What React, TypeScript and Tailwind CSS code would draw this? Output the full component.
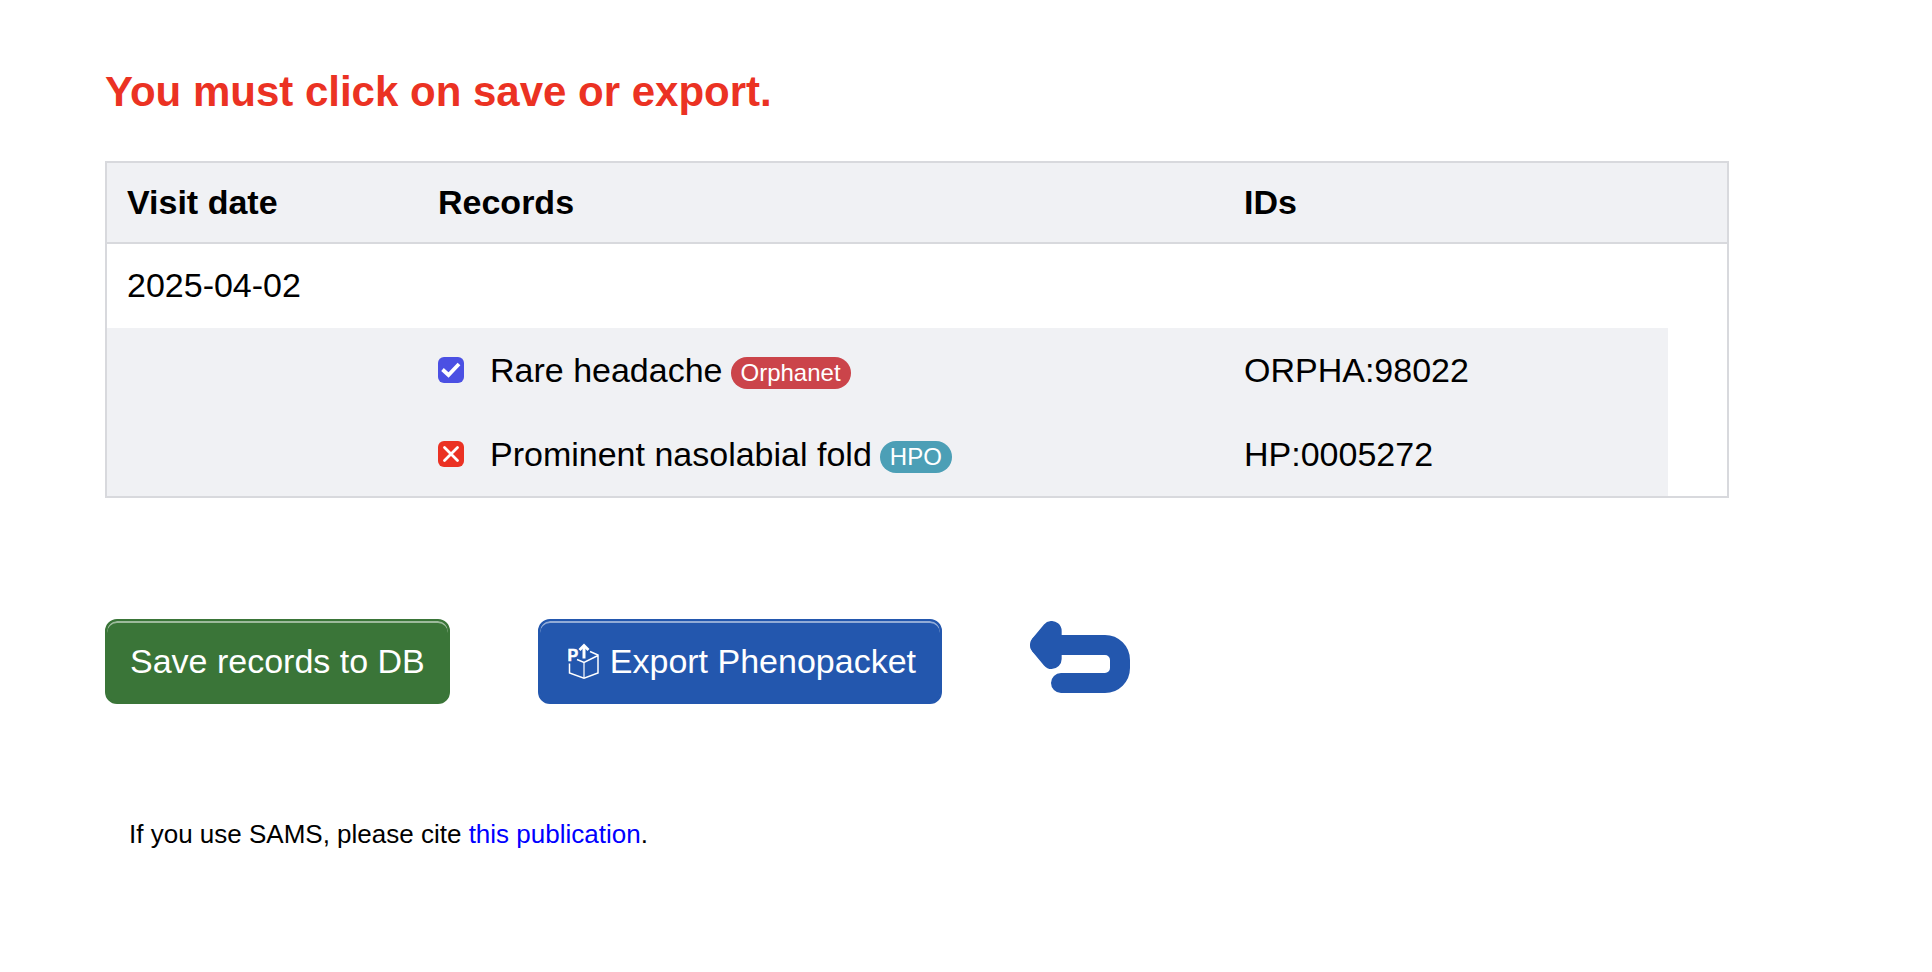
import { useState } from 'react'
import { clsx } from 'clsx'

const visits = [
  {
    date: '2025-04-02',
    records: [
      { name: 'Rare headache', source: 'Orphanet', id: 'ORPHA:98022', present: true },
      { name: 'Prominent nasolabial fold', source: 'HPO', id: 'HP:0005272', present: false },
    ],
  },
]

function StatusBox({ id, present }: { id: string; present: boolean }) {
  const [checked, setChecked] = useState(true)

  return (
    <span className="grid size-[26px] shrink-0">
      <input
        id={id}
        type="checkbox"
        checked={checked}
        onChange={(e) => setChecked(e.target.checked)}
        className={clsx(
          'col-start-1 row-start-1 size-[26px] appearance-none rounded-md',
          present ? 'bg-[#4b50e3]' : 'bg-[#eb3223]',
        )}
      />
      {checked && (
        <svg
          viewBox="0 0 26 26"
          className="pointer-events-none col-start-1 row-start-1 size-[26px]"
          fill="none"
          stroke="white"
          aria-hidden
        >
          {present ? (
            <path d="M4.500 12.500l6 5.500L21 7" strokeWidth="3.8" />
          ) : (
            <path d="M6.500 6.500l13 13M19.500 6.500l-13 13" strokeWidth="2.8" strokeLinecap="round" />
          )}
        </svg>
      )}
    </span>
  )
}

function SourceBadge({ source }: { source: string }) {
  return (
    <span
      className={clsx(
        'mt-[5px] rounded-full px-[10px] text-2xl leading-8 text-white',
        source === 'HPO' ? 'bg-[#4c9fb6]' : 'bg-[#cb444a]',
      )}
    >
      {source}
    </span>
  )
}

function PacketIcon() {
  return (
    <svg viewBox="0 0 32 36" className="h-9 w-8" fill="none" stroke="white" aria-hidden>
      <path d="M1.500 20.500V30L16 35.200 30 30V12L22 8.500M9 16.500l7 3 14-7" strokeWidth="1.5" />
      <path d="M16 19.500V35" strokeWidth="1.2" />
      <path d="M16 15.500V3" strokeWidth="3" />
      <path d="M11.500 7l4.500-4.500L20.500 7" strokeWidth="2.800" />
      <text x="-0.500" y="18" fill="white" strokeWidth="0.5" fontSize="16" fontWeight="bold" fontFamily="Liberation Sans, sans-serif">
        P
      </text>
    </svg>
  )
}

function BackIcon() {
  return (
    <svg viewBox="60 63 300 216" className="h-[72px] w-[100px]" stroke="#2357ae" strokeWidth="60" strokeLinejoin="round" aria-hidden>
      <path d="M90 135L125 93V177Z" fill="#2357ae" />
      <path d="M90 135H285A45 45 0 0 1 330 180V204A45 45 0 0 1 285 249H153" fill="none" strokeLinecap="round" />
    </svg>
  )
}

const buttonClass =
  'flex h-[85px] items-center rounded-xl border-2 pb-px text-[34px] text-white shadow-[inset_0_2px_0_rgba(255,255,255,0.5)]'

export default function App() {
  return (
    <main className="min-h-screen bg-white px-[105px] pt-[66px] pb-16 font-['Liberation_Sans',Arial,sans-serif] text-[34px] text-black">
      <h1 className="text-[42px] leading-[52px] font-bold text-[#eb3223]">You must click on save or export.</h1>

      <table className="mt-[43px] w-full max-w-[1624px] table-fixed border-separate border-spacing-0 border-2 border-[#d8d9dd] text-left leading-10">
        <colgroup>
          <col className="w-[311px]" />
          <col />
          <col className="w-[444px]" />
          <col className="w-[59px]" />
        </colgroup>
        <thead className="bg-[#f0f1f4]">
          <tr className="h-[81px]">
            <th className="border-b-2 border-[#d8d9dd] px-5 pb-[2px]">Visit date</th>
            <th className="border-b-2 border-[#d8d9dd] px-5 pb-[2px]">Records</th>
            <th className="border-b-2 border-[#d8d9dd] px-5 pb-[2px]">IDs</th>
            <td className="border-b-2 border-[#d8d9dd]" />
          </tr>
        </thead>
        {visits.map((visit) => (
          <tbody key={visit.date}>
            <tr className="h-[84px]">
              <td className="px-5 pb-[2px]">{visit.date}</td>
            </tr>
            {visit.records.map((record) => (
              <tr key={record.id} className="h-[84px]">
                <td className="bg-[#f0f1f4]" />
                <td className="bg-[#f0f1f4] px-5">
                  <div className="flex items-center">
                    <StatusBox id={record.id} present={record.present} />
                    <label htmlFor={record.id} className="ml-[26px] flex items-center gap-2">
                      {record.name}
                      <SourceBadge source={record.source} />
                    </label>
                  </div>
                </td>
                <td className="bg-[#f0f1f4] px-5">{record.id}</td>
              </tr>
            ))}
          </tbody>
        ))}
      </table>

      <div className="mt-[121px] flex items-start gap-[88px]">
        <button type="button" className={clsx(buttonClass, 'border-[#3a7538] bg-[#3a7538] px-[23px]')}>
          Save records to DB
        </button>
        <button type="button" className={clsx(buttonClass, 'gap-[10px] border-[#2357ae] bg-[#2357ae] pr-6 pl-7')}>
          <PacketIcon />
          Export Phenopacket
        </button>
        <button type="button" aria-label="Back" className="mt-[2px]">
          <BackIcon />
        </button>
      </div>

      <p className="mt-[114px] px-6 text-[26px] leading-8">
        If you use SAMS, please cite{' '}
        <a href="#publication" className="text-[#0000ff]">
          this publication
        </a>
        .
      </p>
    </main>
  )
}
